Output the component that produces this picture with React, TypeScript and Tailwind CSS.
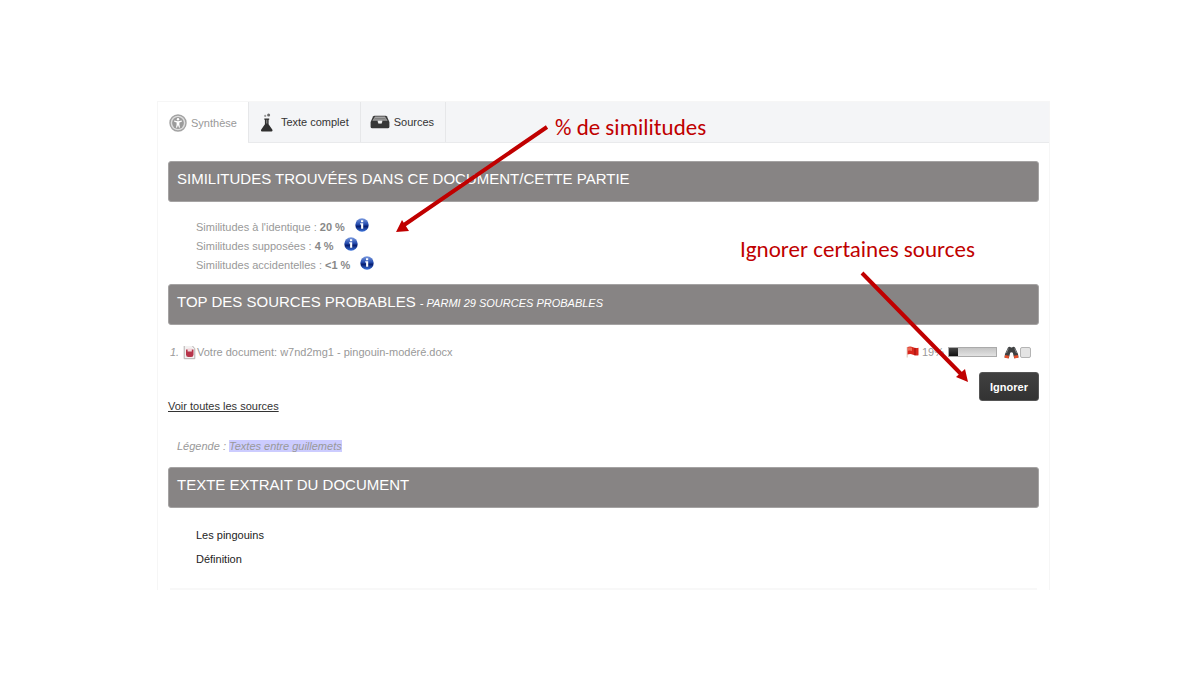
import React from 'react';

interface Similarity {
  label: string;
  value: string;
}

const similarities: Similarity[] = [
  { label: "Similitudes à l'identique", value: '20 %' },
  { label: 'Similitudes supposées', value: '4 %' },
  { label: 'Similitudes accidentelles', value: '<1 %' },
];

const SummaryIcon = () => (
  <svg width="18" height="18" viewBox="0 0 18 18" aria-hidden="true">
    <circle cx="9" cy="9" r="8" fill="#dedede" stroke="#a3a3a3" strokeWidth="1.4" />
    <circle cx="9" cy="9" r="5.9" fill="#9b9b9b" />
    <circle cx="9" cy="5.3" r="1.2" fill="#fff" />
    <path d="M5.2 6.6 9 7.3l3.8-.7v1.2l-2.4.6v2l.6 3-1 .3L9 11l-1 2.7-1-.3.6-3v-2l-2.4-.6z" fill="#fff" />
  </svg>
);

const FlaskIcon = () => (
  <svg width="13" height="19" viewBox="0 0 13 19" aria-hidden="true">
    <circle cx="8.6" cy="1.9" r="1.5" fill="#6a6a6a" />
    <circle cx="5.2" cy="2.9" r="1.1" fill="#999" />
    <path d="M4.3 5.5h4.9v1.2H8.6v4.5l3.8 5.6q.6 1.700-.8 1.700H1.900q-1.400 0-.8-1.700l3.800-5.600V6.700h-.6z" fill="#303030" />
    <path d="M6 6.800h1.400v3.700H6z" fill="#777" />
  </svg>
);

const TrayIcon = () => (
  <svg width="20" height="14" viewBox="0 0 20 14" aria-hidden="true">
    <path d="M4.5.7h11q1 0 1.5.8L19.4 7v4.7q0 1.6-1.6 1.6H2.2Q.6 13.3.6 11.7V7L3 1.500q.5-.8 1.500-.8z" fill="#373737" />
    <path d="M5 1.500h10l2.600 4.300h-5l-.7 2.500H8.100l-.7-2.500h-5z" fill="#a3a3a3" />
    <path d="M4.500 3.500h11M3.700 5h12.600" stroke="#777" strokeWidth=".8" />
    <path d="M7.800 5.800h4.400l-.6 2.700H8.400z" fill="#f2f2f2" />
  </svg>
);

const InfoIcon = () => (
  <svg width="14" height="14" viewBox="0 0 14 14" aria-hidden="true">
    <defs>
      <linearGradient id="info-ball" x1="0" y1="0" x2="0" y2="1">
        <stop offset="0" stopColor="#7b9be0" />
        <stop offset=".45" stopColor="#244bae" />
        <stop offset=".6" stopColor="#061d70" />
        <stop offset="1" stopColor="#3e75dd" />
      </linearGradient>
    </defs>
    <circle cx="7" cy="7" r="6.7" fill="url(#info-ball)" />
    <path d="M6 2.300h2.200v2H6zM5.200 5.200h3v5.500H6.100V6.500h-.9z" fill="#fff" />
  </svg>
);

const DocumentIcon = () => (
  <svg width="13" height="15" viewBox="0 0 13 15" aria-hidden="true">
    <path d="M1 1h8.500L12 3.500V14H1z" fill="#f3f1f1" />
    <path d="M1.200 1v12.700h10.600V3.700L9.500 1" fill="none" stroke="#b5b0b0" />
    <path d="M3 4.500h7.500v5q0 2.500-2.300 2.500H5.300Q3 12 3 9.500z" fill="#b7354b" />
    <path d="M4.600 3.500h4.200v3H4.600z" fill="#f2d8dc" />
  </svg>
);

const FlagIcon = () => (
  <svg width="14" height="12" viewBox="0 0 14 12" aria-hidden="true">
    <path d="M1.200 1v10.500" stroke="#e3cfc2" strokeWidth="1.2" />
    <path d="M1.500 1q3-1 5.500.3t5.500.4v7.600q-3 .6-5.500-.6t-5.500-.2z" fill="#d9261c" />
    <path d="M2 1.500q2-.6 4 .2v3.200q-2-.7-4-.2z" fill="#ef6a55" />
    <path d="M9 2v7.300" stroke="#ae1711" strokeWidth="1.5" />
  </svg>
);

const BinocularsIcon = () => (
  <svg width="15" height="13" viewBox="0 0 15 13" aria-hidden="true">
    <path d="M4 1.500Q5.500.2 7 1.500h1q1.500-1.300 3 0l3 6.500.5 3.500-4.300.7-1.400-5.400Q7.500 5.500 6.200 6.800l-1.400 5.400-4.300-.7L1 8z" fill="#3f4142" />
    <path d="M4.300 2.500 2.500 7M10.700 2.500 12.500 7" stroke="#84888a" strokeWidth=".9" />
    <path d="m1 9 4.200.8-.6 2.600-4-.7zM14 9l-4.200.8.6 2.600 4-.7z" fill="#e4502d" />
  </svg>
);

const SectionTitle: React.FC<{ children: React.ReactNode }> = ({ children }) => (
  <h2 className="h-[41px] rounded-[3px] border border-[#a5a3a3] bg-[#878484] px-2 pt-[5px] text-[15px] leading-6 text-white">
    {children}
  </h2>
);

const Tabs = () => (
  <nav className="flex h-[41px] border-b border-[#e9eaec] bg-[#f4f5f7] text-[#333]">
    <a href="#synthese" className="-mb-px flex items-center gap-1 bg-white px-[11px] text-[#999]">
      <SummaryIcon />
      Synthèse
    </a>
    <a href="#texte" className="flex items-center gap-2 border-x border-[#e6e7e9] px-[11px]">
      <FlaskIcon />
      Texte complet
    </a>
    <a href="#sources" className="flex items-center gap-1 border-r border-[#e6e7e9] pr-[11px] pl-[9px]">
      <TrayIcon />
      Sources
    </a>
  </nav>
);

const SourceRow: React.FC<{ percent: number }> = ({ percent }) => (
  <div className="mt-[18px] flex h-[18px] items-center pr-2 pl-0.5">
    <em className="w-[13px]">1.</em>
    <DocumentIcon />
    <label htmlFor="source-1" className="ml-px">
      Votre document: w7nd2mg1 - pingouin-modéré.docx
    </label>
    <div className="ml-auto flex items-center">
      <FlagIcon />
      <span className="ml-0.5 w-[26px]">{percent}%</span>
      <div className="h-[10px] w-[49px] border border-[#aaa] bg-linear-to-b from-[#c4c4c4] to-[#e2e2e2]">
        <div className="h-full bg-linear-to-b from-[#444] to-[#111]" style={{ width: `${percent}%` }} />
      </div>
      <span className="ml-[7px]">
        <BinocularsIcon />
      </span>
      <input
        id="source-1"
        type="checkbox"
        className="ml-px size-[11px] appearance-none rounded-[2px] border border-[#b4b4b4] bg-[#e4e4e4] checked:bg-[#555]"
      />
    </div>
  </div>
);

// Red notes and arrows laid over the report
const Annotations = () => (
  <div className="pointer-events-none absolute inset-0 font-['Carlito','Lato',sans-serif] text-[23px] leading-6 text-[#c00000]">
    <p className="absolute top-[13px] left-[397px] whitespace-nowrap">% de similitudes</p>
    <p className="absolute top-[135px] left-[582px] whitespace-nowrap">Ignorer certaines sources</p>
    <svg className="absolute top-0 left-0" width="892" height="320" viewBox="0 0 892 320" aria-hidden="true">
      <path d="M389 25 246 123M704 171l100 102" stroke="#c00000" strokeWidth="4" />
      <path d="m238 130 6-12 7 11zM810 280l-12-5 9-8z" fill="#c00000" />
    </svg>
  </div>
);

const App = () => {
  return (
    <div className="min-h-screen bg-white pt-[101px] pr-[150px] pl-[157px] font-['Liberation_Sans',Arial,sans-serif] text-[11px] leading-[18px] text-[#999]">
      <div className="relative border-x border-t border-[#f6f6f6]">
        <Tabs />
        <main className="px-[10px] pt-[18px]">
          <SectionTitle>SIMILITUDES TROUVÉES DANS CE DOCUMENT/CETTE PARTIE</SectionTitle>
          <ul className="pt-4 pb-[9px] pl-7 leading-[19px]">
            {similarities.map((item) => (
              <li key={item.label} className="flex">
                <span>
                  {item.label} : <strong className="text-[#888]">{item.value}</strong>
                </span>
                <span className="ml-[10px]">
                  <InfoIcon />
                </span>
              </li>
            ))}
          </ul>
          <SectionTitle>
            TOP DES SOURCES PROBABLES <em className="text-[11px]">- PARMI 29 SOURCES PROBABLES</em>
          </SectionTitle>
          <SourceRow percent={19} />
          <div className="mt-[11px] flex items-end justify-between">
            <a href="#toutes" className="text-[#333] underline">
              Voir toutes les sources
            </a>
            <button
              type="button"
              className="mb-[14px] h-[29px] w-[60px] rounded-[3px] border border-[#555] bg-linear-to-b from-[#404040] to-[#333] font-bold text-white"
            >
              Ignorer
            </button>
          </div>
          <p className="mt-[22px] mb-3 pl-[9px] italic">
            Légende : <span className="bg-[#ccccff]">Textes entre guillemets</span>
          </p>
          <SectionTitle>TEXTE EXTRAIT DU DOCUMENT</SectionTitle>
          <div className="mt-[18px] flex flex-col gap-[6px] pl-7 text-[#222]">
            <p>Les pingouins</p>
            <p>Définition</p>
          </div>
          <hr className="mx-0.5 mt-5 mb-0.5 border-t-2 border-[#f8f8f8]" />
        </main>
        <Annotations />
      </div>
    </div>
  );
};

export default App;
